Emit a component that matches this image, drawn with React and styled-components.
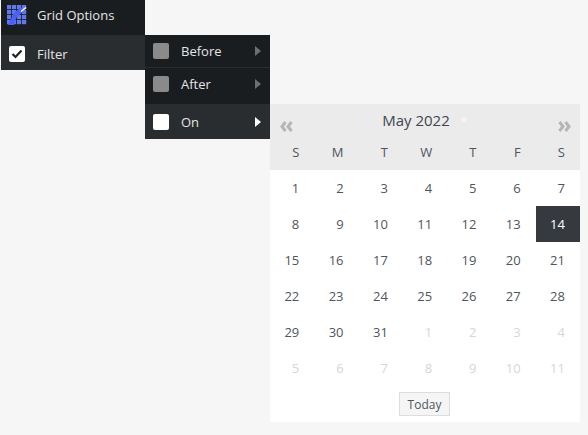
import React from 'react';
import styled, { createGlobalStyle } from 'styled-components';

const GlobalStyle = createGlobalStyle`
	html, body {
		margin: 0;
		padding: 0;
		background: #f6f6f6;
		font-family: 'Open Sans', 'Liberation Sans', sans-serif;
	}
`;

const WEEK = ['S', 'M', 'T', 'W', 'T', 'F', 'S'];
const DAYS = [
	[1, 2, 3, 4, 5, 6, 7],
	[8, 9, 10, 11, 12, 13, 14],
	[15, 16, 17, 18, 19, 20, 21],
	[22, 23, 24, 25, 26, 27, 28],
	[29, 30, 31, 1, 2, 3, 4],
	[5, 6, 7, 8, 9, 10, 11],
];

const GridIcon = () => (
	<svg width="20" height="20" viewBox="0 0 20 20">
		{[0, 5, 10, 15].map((y) =>
			[0, 5, 10, 15].map((x) => <rect key={`${x}-${y}`} x={x} y={y} width="4.2" height="4.2" fill="#5f78ee" />)
		)}
		<path d="M1 20 L7 20 L9 13 L17 5.5 L14 2 L7 8 L5 12 Z" fill="#4d5ff5" />
		<path d="M14 6.5 L19 2.5" stroke="#fff" strokeWidth="1.6" />
	</svg>
);

const Chevrons = ({ flip }) => (
	<svg width="13" height="11" viewBox="0 0 13 11" style={flip ? { transform: 'scaleX(-1)' } : undefined}>
		<path d="M5.5 1 L2 5.5 L5.5 10 M11.5 1 L8 5.5 L11.5 10" fill="none" stroke="#b5b5b5" strokeWidth="3" />
	</svg>
);

const App = () => {
	return (
		<Page>
			<GlobalStyle />
			<Menu>
				<MenuRow $height={35} $pushUp={6}>
					<IconSlot><GridIcon /></IconSlot>
					<Label>Grid Options</Label>
				</MenuRow>
				<MenuRow $height={35} $pushDown={2} $active>
					<IconSlot>
						<Check>
							<svg width="12" height="10" viewBox="0 0 12 10">
								<path d="M1.5 5 L4.5 8 L10.5 1.5" fill="none" stroke="#1f2327" strokeWidth="2.2" />
							</svg>
						</Check>
					</IconSlot>
					<Label>Filter</Label>
				</MenuRow>
			</Menu>
			<SubMenu>
				<SubRow $height={33} $line>
					<Swatch />
					<SubLabel>Before</SubLabel>
					<Arrow />
				</SubRow>
				<SubRow $height={36} $pushUp={4}>
					<Swatch />
					<SubLabel>After</SubLabel>
					<Arrow />
				</SubRow>
				<SubRow $height={35} $active>
					<Swatch $on />
					<SubLabel>On</SubLabel>
					<Arrow $on />
				</SubRow>
			</SubMenu>
			<Calendar>
				<CalendarHead>
					<TitleRow>
						<Title>May 2022</Title>
						<Caret />
					</TitleRow>
					<NavRow>
						<Chevrons />
						<Chevrons flip />
					</NavRow>
					<WeekRow>
						{WEEK.map((d, i) => (
							<WeekDay key={i}>{d}</WeekDay>
						))}
					</WeekRow>
				</CalendarHead>
				<DayGrid>
					{DAYS.map((row, r) =>
						row.map((d, c) => (
							<Day key={`${r}-${c}`} $muted={r === 5 || (r === 4 && c > 2)} $selected={d === 14}>
								{d}
							</Day>
						))
					)}
				</DayGrid>
				<Footer>
					<TodayButton>Today</TodayButton>
				</Footer>
			</Calendar>
		</Page>
	);
};

const Page = styled.div`
	display: flex;
	align-items: flex-start;
	width: 588px;
	height: 435px;
	padding-left: 1px;
	box-sizing: border-box;
	overflow: hidden;
`;

const Menu = styled.div`
	width: 144px;
	background: #1a1d20;
`;

const MenuRow = styled.div`
	display: flex;
	align-items: center;
	box-sizing: border-box;
	height: ${(p) => p.$height}px;
	padding-bottom: ${(p) => p.$pushUp || 0}px;
	padding-top: ${(p) => p.$pushDown || 0}px;
	background: ${(p) => (p.$active ? '#2a2d30' : 'transparent')};
`;

const IconSlot = styled.div`
	display: flex;
	justify-content: center;
	width: 31px;
	margin-right: 5px;
	flex: none;
`;

const Label = styled.span`
	font-size: 13px;
	color: #e4e4e4;
`;

const Check = styled.div`
	display: flex;
	align-items: center;
	justify-content: center;
	width: 16px;
	height: 16px;
	background: #fff;
	border-radius: 2px;
`;

const SubMenu = styled.div`
	width: 125px;
	margin-top: 35px;
	background: #1a1d20;
`;

const SubRow = styled.div`
	display: flex;
	align-items: center;
	box-sizing: border-box;
	height: ${(p) => p.$height}px;
	padding: 0 9px ${(p) => p.$pushUp || 0}px 8px;
	background: ${(p) => (p.$active ? '#2a2d30' : 'transparent')};
	border-bottom: ${(p) => (p.$line ? '1px solid #2a2d30' : '0')};
`;

const Swatch = styled.div`
	width: 16px;
	height: 16px;
	flex: none;
	border-radius: 2px;
	background: ${(p) => (p.$on ? '#fff' : '#8a8a8a')};
`;

const SubLabel = styled.span`
	flex: 1;
	margin-left: 12px;
	font-size: 13px;
	color: #e4e4e4;
`;

const Arrow = styled.div`
	width: 0;
	height: 0;
	border-style: solid;
	border-width: 5px 0 5px 6px;
	border-color: transparent transparent transparent ${(p) => (p.$on ? '#fff' : '#6f6f6f')};
`;

const Calendar = styled.div`
	width: 310px;
	margin-top: 104px;
	background: #fff;
`;

const CalendarHead = styled.div`
	position: relative;
	height: 66px;
	box-sizing: border-box;
	padding-top: 5px;
	background: #ebebeb;
`;

const TitleRow = styled.div`
	display: flex;
	justify-content: center;
	align-items: center;
	height: 22px;
`;

const Title = styled.span`
	font-size: 15px;
	color: #3f4650;
`;

const Caret = styled.div`
	width: 0;
	height: 0;
	margin-left: 10px;
	border-style: solid;
	border-width: 5px 4px 0 4px;
	border-color: #f5f5f5 transparent transparent transparent;
`;

const NavRow = styled.div`
	position: absolute;
	top: 17px;
	left: 10px;
	right: 9px;
	display: flex;
	justify-content: space-between;
`;

const WeekRow = styled.div`
	display: grid;
	grid-template-columns: repeat(7, 1fr);
	margin-top: 12px;
`;

const WeekDay = styled.span`
	padding-right: 15px;
	text-align: right;
	font-size: 13px;
	line-height: 18px;
	color: #50555c;
`;

const DayGrid = styled.div`
	display: grid;
	grid-template-columns: repeat(7, 1fr);
	grid-auto-rows: 36px;
`;

const Day = styled.div`
	padding-right: 15px;
	text-align: right;
	font-size: 13px;
	line-height: 36px;
	color: ${(p) => (p.$selected ? '#fff' : p.$muted ? '#d6d6d6' : '#50555c')};
	background: ${(p) => (p.$selected ? '#363a3e' : 'transparent')};
`;

const Footer = styled.div`
	display: flex;
	justify-content: center;
	padding: 6px 1px 6px 0;
`;

const TodayButton = styled.button`
	box-sizing: border-box;
	width: 51px;
	height: 24px;
	padding: 0;
	font-family: inherit;
	font-size: 12px;
	color: #50555c;
	background: #f5f5f5;
	border: 1px solid #ddd;
`;

export default App;
